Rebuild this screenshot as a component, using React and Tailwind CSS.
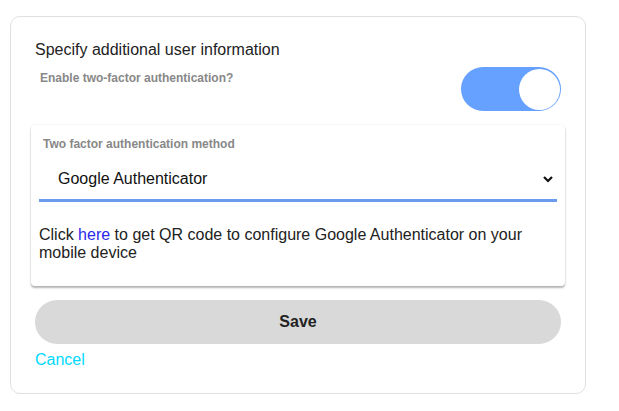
import React from "react";

export default function App() {
  return (
    <div className="w-[619px] h-[411px] bg-white overflow-hidden pt-[16px] pl-[10px]" style={{ fontFamily: '"Liberation Sans", Arial, sans-serif' }}>
      <div className="w-[576px] h-[378px] border border-[#e0e0e0] rounded-[10px] px-6 pt-[24px]">
        <div className="text-[16px] leading-[18px] text-[#222]">Specify additional user information</div>
        <div className="mt-[8px] flex justify-between items-start">
          <div className="mt-[4px] ml-[5px] text-[12px] leading-[14px] font-bold text-[#888]">Enable two-factor authentication?</div>
          <div className="w-[100px] h-[44px] rounded-full bg-[#66a1ff] flex items-center justify-end pr-[1px]">
            <div className="w-[41px] h-[41px] rounded-full bg-white"></div>
          </div>
        </div>
        <div className="mt-[14px] mx-[-4px] rounded-[4px] bg-white shadow-[0_2px_2px_rgba(0,0,0,0.28),0_0_3px_rgba(0,0,0,0.08)] pt-[12px] pb-[24px]">
          <div className="pl-[12px] text-[12px] leading-[14px] font-bold text-[#888]">Two factor authentication method</div>
          <div className="px-[8px]">
            <div className="mt-[8px] h-[43px] border-b-[3px] border-[#6b9bef] flex items-center justify-between pl-[19px] pr-[4px]">
              <span className="text-[16px] leading-[18px] text-[#111]">Google Authenticator</span>
              <svg width="10" height="7" viewBox="0 0 10 7" className="mt-[1px]">
                <polyline points="1,1 5,5 9,1" fill="none" stroke="#111" strokeWidth="2.2" />
              </svg>
            </div>
            <p className="mt-[24px] text-[16px] leading-[18px] text-[#222]">
              Click <span className="text-[#2a2ae8]">here</span> to get QR code to configure Google Authenticator on your mobile device
            </p>
          </div>
        </div>
        <button className="mt-[14px] w-full h-[44px] rounded-full bg-[#d9d9d9] text-[16px] font-bold text-[#222]">Save</button>
        <div className="mt-[7px] text-[16px] leading-[18px] text-[#00d9ff]">Cancel</div>
      </div>
    </div>
  );
}
